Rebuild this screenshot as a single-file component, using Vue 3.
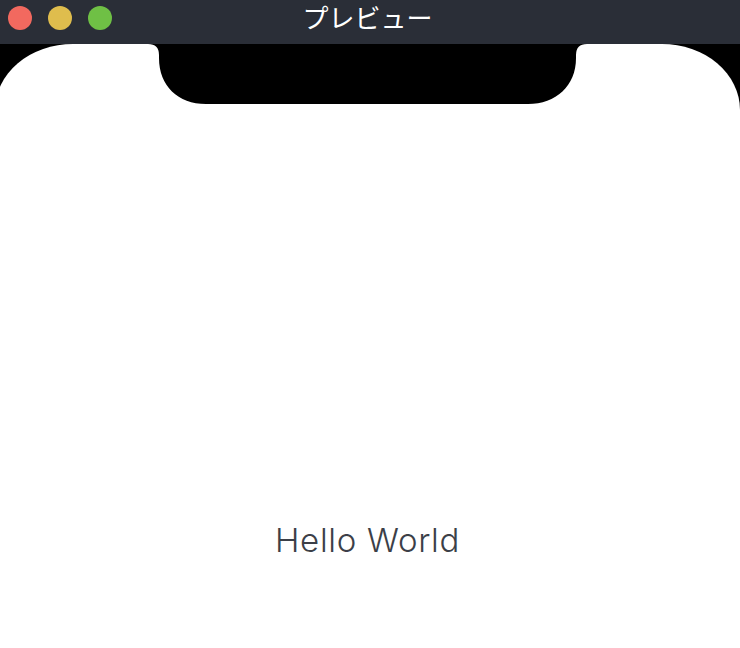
<script setup>
const dots = ['red', 'yellow', 'green']
</script>

<template>
  <div class="window">
    <header class="titlebar">
      <div class="dots">
        <span v-for="d in dots" :key="d" class="dot" :class="d"></span>
      </div>
      <div class="title">プレビュー</div>
    </header>
    <main class="stage">
      <section class="screen">
        <svg class="notch" width="440" height="60" viewBox="0 0 440 60">
          <path d="M0 0 Q11 0 11 11 V14 C11 42 30 60 58 60 H380 C408 60 428 42 428 14 V11 Q428 0 439 0 Z" fill="#000" />
        </svg>
        <p class="hello">Hello World</p>
      </section>
    </main>
  </div>
</template>

<style scoped>
.window {
  width: 740px;
  height: 648px;
  display: flex;
  flex-direction: column;
  overflow: hidden;
  background: #fff;
}
.titlebar {
  position: relative;
  height: 44px;
  box-sizing: border-box;
  padding: 2px 5px 0 0;
  flex: none;
  background: #2a2e37;
  display: flex;
  align-items: flex-start;
  justify-content: center;
}
.dots {
  position: absolute;
  left: 8px;
  top: 6px;
  display: flex;
  gap: 16px;
}
.dot {
  width: 24px;
  height: 24px;
  border-radius: 50%;
}
.red { background: #f2695f; }
.yellow { background: #dfbd4d; }
.green { background: #6fc045; }
.title {
  color: #fff;
  font: 400 26px/29px "Noto Sans CJK JP", sans-serif;
}
.stage {
  flex: 1;
  background: #000;
  overflow: hidden;
}
.screen {
  position: relative;
  margin-left: -5px;
  width: 745px;
  height: 100%;
  background: #fff;
  border-radius: 78px 78px 0 0 / 66px 66px 0 0;
  display: flex;
  flex-direction: column;
  justify-content: flex-end;
  align-items: center;
  box-sizing: border-box;
  padding-bottom: 88px;
}
.notch {
  position: absolute;
  top: 0;
  left: 153px;
}
.hello {
  margin: 0;
  color: #3c3f48;
  font: 300 33px/40px Inter, "Open Sans", sans-serif;
  letter-spacing: 0.7px;
}
</style>
